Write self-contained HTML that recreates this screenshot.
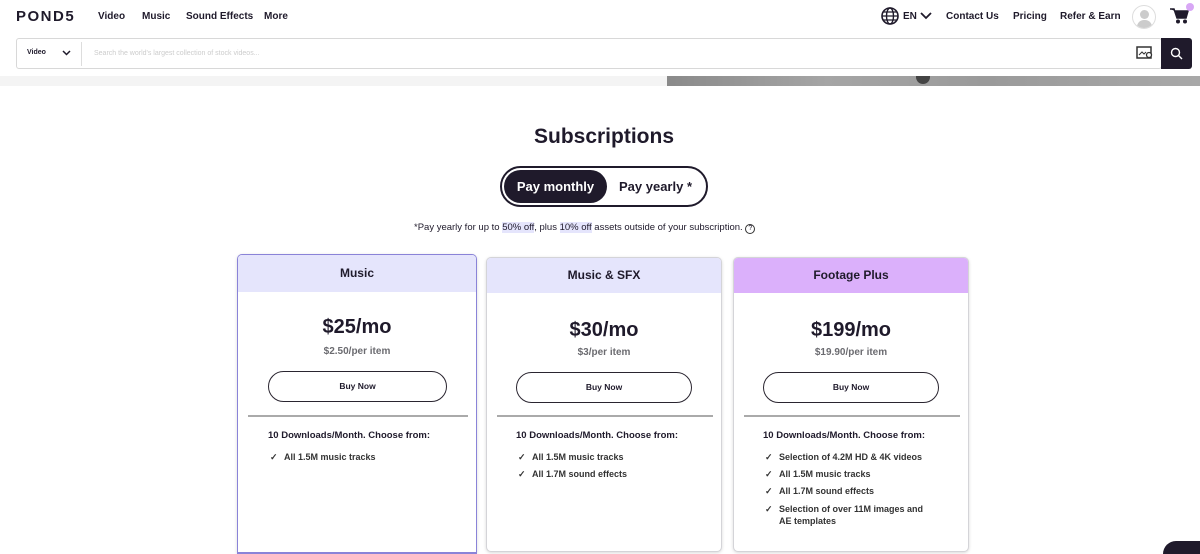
<!DOCTYPE html><html><head><style>
*{margin:0;padding:0;box-sizing:border-box}
html{width:1200px;height:554px;overflow:hidden}
body{width:1200px;height:554px;overflow:hidden;background:#fff;font-family:"Liberation Sans",sans-serif;color:#1f1a2b;position:relative}
.a{position:absolute}
.nav{font-size:10px;font-weight:bold;top:11px}
.card{position:absolute;background:#fff;border:1px solid #d4d4d8;border-radius:5px;overflow:hidden;box-shadow:0 1px 3px rgba(0,0,0,.15)}
.hd{height:35px;text-align:center;font-size:12px;font-weight:bold;line-height:34px}
.pr{position:absolute;width:100%;text-align:center;font-size:20px;font-weight:bold}
.pi{position:absolute;width:100%;text-align:center;font-size:10px;color:#6b6b70;font-weight:bold}
.btn{position:absolute;height:31px;border:1.5px solid #2a2530;border-radius:16px;text-align:center;font-size:8.5px;font-weight:bold;line-height:28px}
.dv{position:absolute;height:1.5px;background:#aaa}
.dl{position:absolute;font-size:9.5px;font-weight:bold}
.li{position:absolute;font-size:9px;font-weight:bold;color:#333}
.li:before{content:"✓";position:absolute;left:-14px;font-size:9px}
</style></head><body>
<div class="a" style="left:16px;top:8px;font-size:15px;font-weight:bold;letter-spacing:1.5px">POND5</div>
<div class="a nav" style="left:98px">Video</div>
<div class="a nav" style="left:142px">Music</div>
<div class="a nav" style="left:186px">Sound Effects</div>
<div class="a nav" style="left:264px">More</div>
<svg class="a" style="left:881px;top:7px" width="18" height="18" viewBox="0 0 18 18"><circle cx="9" cy="9" r="8" fill="none" stroke="#1f1a2b" stroke-width="1.6"/><ellipse cx="9" cy="9" rx="3.5" ry="8" fill="none" stroke="#1f1a2b" stroke-width="1.4"/><path d="M1 9h16M2.5 5h13M2.5 13h13" stroke="#1f1a2b" stroke-width="1.3"/></svg>
<div class="a nav" style="left:903px">EN</div>
<svg class="a" style="left:920px;top:12px" width="12" height="8"><path d="M1 1l5 5 5-5" stroke="#1f1a2b" stroke-width="1.8" fill="none"/></svg>
<div class="a nav" style="left:946px">Contact Us</div>
<div class="a nav" style="left:1013px">Pricing</div>
<div class="a nav" style="left:1060px">Refer &amp; Earn</div>
<div class="a" style="left:1132px;top:5px;width:24px;height:24px;border-radius:50%;border:1px solid #ddd;overflow:hidden"><div class="a" style="left:7px;top:4px;width:9px;height:9px;border-radius:50%;background:#ccc"></div><div class="a" style="left:4px;top:14px;width:15px;height:10px;border-radius:7px 7px 0 0;background:#ccc"></div></div>
<svg class="a" style="left:1170px;top:7px" width="20" height="18"><path d="M0 2h4l3 9h9l2-7H5" fill="#1f1a2b" stroke="#1f1a2b" stroke-width="1.5"/><circle cx="8" cy="14.5" r="2" fill="#1f1a2b"/><circle cx="15" cy="14.5" r="2" fill="#1f1a2b"/></svg>
<div class="a" style="left:1186px;top:3px;width:8px;height:8px;border-radius:50%;background:#d8a7f5"></div>
<div class="a" style="left:16px;top:38px;width:1146px;height:31px;border:1px solid #d8d8d8;border-radius:3px"></div>
<div class="a" style="left:27px;top:49px;font-size:7px;font-weight:bold">Video</div>
<svg class="a" style="left:62px;top:50px" width="9" height="6"><path d="M1 1l3.5 3.5L8 1" stroke="#1f1a2b" stroke-width="1.5" fill="none"/></svg>
<div class="a" style="left:81px;top:42px;width:1px;height:24px;background:#ddd"></div>
<div class="a" style="left:94px;top:50px;font-size:7px;color:#ccc">Search the world's largest collection of stock videos...</div>
<svg class="a" style="left:1136px;top:46px" width="18" height="14"><rect x="1" y="1" width="14" height="11" fill="none" stroke="#333" stroke-width="1.5"/><path d="M3 9l3-3 2 2 2-2" stroke="#333" fill="none"/><circle cx="13" cy="9" r="2.5" fill="#fff" stroke="#333" stroke-width="1.3"/></svg>
<div class="a" style="left:1161px;top:38px;width:31px;height:31px;background:#1f1a2b;border-radius:0 3px 3px 0"></div>
<svg class="a" style="left:1170px;top:47px" width="13" height="13"><circle cx="5.5" cy="5.5" r="4" stroke="#fff" stroke-width="1.4" fill="none"/><path d="M8.5 8.5l3.5 3.5" stroke="#fff" stroke-width="1.4"/></svg>
<div class="a" style="left:0;top:76px;width:667px;height:10px;background:#f4f4f4"></div>
<div class="a" style="left:667px;top:76px;width:533px;height:10px;background:linear-gradient(90deg,#8a8a8a,#a5a5a5 30%,#9a9a9a 60%,#a8a8a8)"></div>
<div class="a" style="left:916px;top:76px;width:14px;height:8px;border-radius:0 0 7px 7px;background:#444"></div>
<div class="a" style="left:0;top:125px;width:1208px;text-align:center;font-size:21px;font-weight:bold">Subscriptions</div>
<div class="a" style="left:500px;top:166px;width:208px;height:41px;border:2px solid #1f1a2b;border-radius:21px"></div>
<div class="a" style="left:504px;top:170px;width:103px;height:33px;background:#1f1a2b;border-radius:17px;color:#fff;font-size:13px;font-weight:bold;text-align:center;line-height:33px">Pay monthly</div>
<div class="a" style="left:619px;top:179px;font-size:13px;font-weight:bold">Pay yearly *</div>
<div class="a" style="left:414px;top:222px;font-size:9.5px">*Pay yearly for up to <span style="background:#e5e5fc">50% off</span>, plus <span style="background:#e5e5fc">10% off</span> assets outside of your subscription. <span style="display:inline-block;width:10px;height:10px;border:1px solid #333;border-radius:50%;font-size:7px;text-align:center;line-height:8px">?</span></div>

<div class="card" style="left:237px;top:254px;width:240px;height:300px;border:1.5px solid #8a83d8;border-bottom:none;border-radius:5px 5px 0 0"><div class="hd" style="background:#e5e5fc;height:37px;line-height:36px">Music</div>
<div class="pr" style="top:61px">$25/mo</div><div class="pi" style="top:91px">$2.50/per item</div>
<div class="btn" style="left:30px;top:116px;width:179px">Buy Now</div><div class="dv" style="left:10px;width:220px;top:160px"></div>
<div class="dl" style="left:30px;top:175px">10 Downloads/Month. Choose from:</div>
<div class="li" style="left:46px;top:197px">All 1.5M music tracks</div></div>
<div class="a" style="left:237px;top:552px;width:240px;height:2px;background:#8a83d8"></div>

<div class="card" style="left:486px;top:257px;width:236px;height:295px"><div class="hd" style="background:#e5e5fc">Music &amp; SFX</div>
<div class="pr" style="top:61px">$30/mo</div><div class="pi" style="top:89px">$3/per item</div>
<div class="btn" style="left:29px;top:114px;width:176px">Buy Now</div><div class="dv" style="left:10px;width:216px;top:157px"></div>
<div class="dl" style="left:29px;top:172px">10 Downloads/Month. Choose from:</div>
<div class="li" style="left:45px;top:194px">All 1.5M music tracks</div>
<div class="li" style="left:45px;top:211px">All 1.7M sound effects</div></div>

<div class="card" style="left:733px;top:257px;width:236px;height:295px"><div class="hd" style="background:#dbb0fb">Footage Plus</div>
<div class="pr" style="top:61px">$199/mo</div><div class="pi" style="top:89px">$19.90/per item</div>
<div class="btn" style="left:29px;top:114px;width:176px">Buy Now</div><div class="dv" style="left:10px;width:216px;top:157px"></div>
<div class="dl" style="left:29px;top:172px">10 Downloads/Month. Choose from:</div>
<div class="li" style="left:45px;top:194px">Selection of 4.2M HD &amp; 4K videos</div>
<div class="li" style="left:45px;top:211px">All 1.5M music tracks</div>
<div class="li" style="left:45px;top:228px">All 1.7M sound effects</div>
<div class="li" style="left:45px;top:245px;line-height:12px">Selection of over 11M images and<br>AE templates</div></div>

<div class="a" style="left:1163px;top:541px;width:37px;height:13px;border-radius:23px 0 0 0;background:#1f1a2b"></div>
</body></html>
